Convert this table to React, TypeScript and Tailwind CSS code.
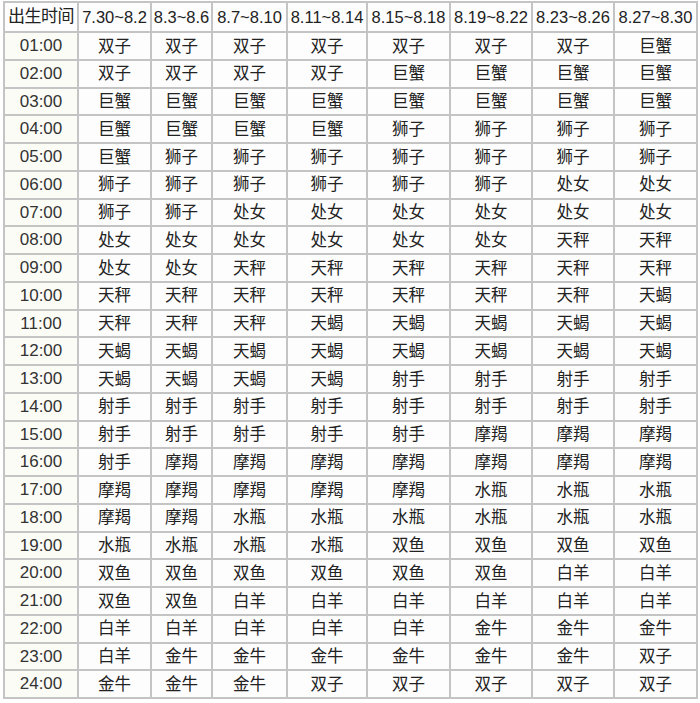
import React from "react";

const RANGES = [
  "7.30~8.2",
  "8.3~8.6",
  "8.7~8.10",
  "8.11~8.14",
  "8.15~8.18",
  "8.19~8.22",
  "8.23~8.26",
  "8.27~8.30",
];

const ROWS: string[][] = [
  ["双子", "双子", "双子", "双子", "双子", "双子", "双子", "巨蟹"],
  ["双子", "双子", "双子", "双子", "巨蟹", "巨蟹", "巨蟹", "巨蟹"],
  ["巨蟹", "巨蟹", "巨蟹", "巨蟹", "巨蟹", "巨蟹", "巨蟹", "巨蟹"],
  ["巨蟹", "巨蟹", "巨蟹", "巨蟹", "狮子", "狮子", "狮子", "狮子"],
  ["巨蟹", "狮子", "狮子", "狮子", "狮子", "狮子", "狮子", "狮子"],
  ["狮子", "狮子", "狮子", "狮子", "狮子", "狮子", "处女", "处女"],
  ["狮子", "狮子", "处女", "处女", "处女", "处女", "处女", "处女"],
  ["处女", "处女", "处女", "处女", "处女", "处女", "天秤", "天秤"],
  ["处女", "处女", "天秤", "天秤", "天秤", "天秤", "天秤", "天秤"],
  ["天秤", "天秤", "天秤", "天秤", "天秤", "天秤", "天秤", "天蝎"],
  ["天秤", "天秤", "天秤", "天蝎", "天蝎", "天蝎", "天蝎", "天蝎"],
  ["天蝎", "天蝎", "天蝎", "天蝎", "天蝎", "天蝎", "天蝎", "天蝎"],
  ["天蝎", "天蝎", "天蝎", "天蝎", "射手", "射手", "射手", "射手"],
  ["射手", "射手", "射手", "射手", "射手", "射手", "射手", "射手"],
  ["射手", "射手", "射手", "射手", "射手", "摩羯", "摩羯", "摩羯"],
  ["射手", "摩羯", "摩羯", "摩羯", "摩羯", "摩羯", "摩羯", "摩羯"],
  ["摩羯", "摩羯", "摩羯", "摩羯", "摩羯", "水瓶", "水瓶", "水瓶"],
  ["摩羯", "摩羯", "水瓶", "水瓶", "水瓶", "水瓶", "水瓶", "水瓶"],
  ["水瓶", "水瓶", "水瓶", "水瓶", "双鱼", "双鱼", "双鱼", "双鱼"],
  ["双鱼", "双鱼", "双鱼", "双鱼", "双鱼", "双鱼", "白羊", "白羊"],
  ["双鱼", "双鱼", "白羊", "白羊", "白羊", "白羊", "白羊", "白羊"],
  ["白羊", "白羊", "白羊", "白羊", "白羊", "金牛", "金牛", "金牛"],
  ["白羊", "金牛", "金牛", "金牛", "金牛", "金牛", "金牛", "双子"],
  ["金牛", "金牛", "金牛", "双子", "双子", "双子", "双子", "双子"],
];

const cell =
  "flex items-center justify-center border-r-2 border-b-2 border-[#c4c4c4] whitespace-nowrap overflow-hidden";

export default function App() {
  return (
    <div className="w-[700px] h-[703px] bg-white pl-[3px] pt-[1px] text-[#222] font-['Liberation_Sans','Noto_Sans_CJK_SC',sans-serif]">
      <div className="grid w-[695px] grid-cols-[74px_73px_61px_75px_80px_83px_82px_82px_83px] grid-rows-[30px_repeat(24,27.75px)] border-l-2 border-t-2 border-[#c4c4c4] bg-[#fdfdfd]">
        <div className={`${cell} text-[17px] tracking-[-0.5px]`}>出生时间</div>
        {RANGES.map((r) => (
          <div key={r} className={`${cell} text-[16.5px]`}>
            {r}
          </div>
        ))}
        {ROWS.map((row, i) => (
          <React.Fragment key={i}>
            <div className={`${cell} text-[17px] bg-[#fcfcf6] text-[#333]`}>
              {String(i + 1).padStart(2, "0")}:00
            </div>
            {row.map((s, j) => (
              <div key={j} className={`${cell} text-[16.5px]`}>
                {s}
              </div>
            ))}
          </React.Fragment>
        ))}
      </div>
    </div>
  );
}
